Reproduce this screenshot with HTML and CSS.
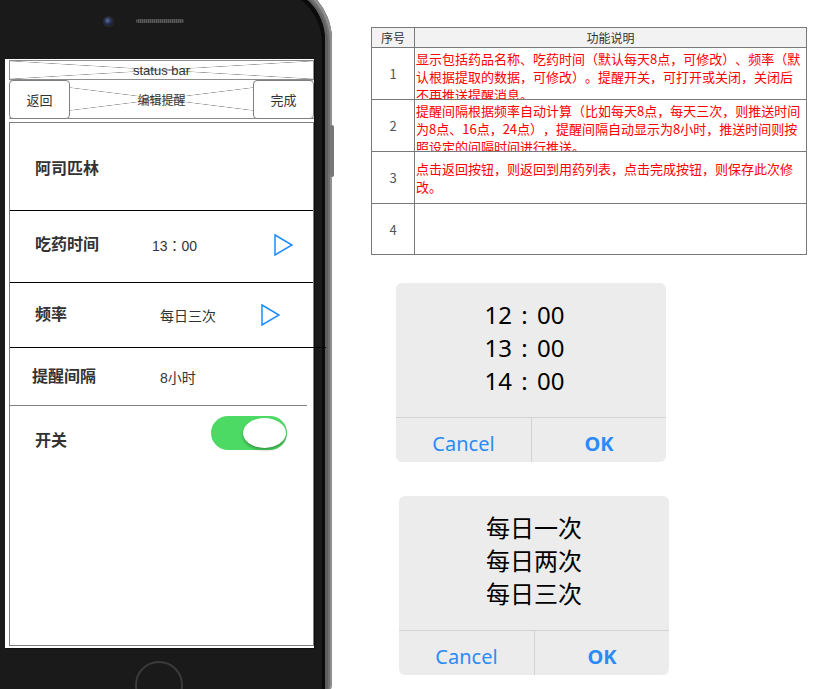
FILE: index.html
```html
<!DOCTYPE html>
<html lang="zh-CN">
<head>
<meta charset="utf-8">
<title>编辑提醒</title>
<link rel="stylesheet" href="styles.css">
</head>
<body>
<div class="page">
  <div class="phone-col">
    <div class="phone">
      <span class="side-button"></span>
      <div class="phone-body">
        <div class="sensors">
          <span class="camera"></span>
          <span class="speaker"></span>
          <span></span>
        </div>
        <div class="screen">
          <div class="statusbar xbox"><span>status bar</span></div>
          <div class="navbar xbox">
            <span class="nav-btn">返回</span>
            <span class="nav-title">编辑提醒</span>
            <span class="nav-btn">完成</span>
          </div>
          <div class="panel">
            <div class="row row-name"><span class="label">阿司匹林</span></div>
            <div class="row row-time">
              <span class="label label-time">吃药时间</span>
              <span class="value value-time">13：00</span>
              <svg class="arrow" viewBox="0 0 19 22"><polygon points="1,1 18,11 1,21" fill="none" stroke="#1e8cff" stroke-width="1.5" stroke-linejoin="miter"/></svg>
            </div>
            <div class="row row-freq">
              <span class="label">频率</span>
              <span class="value">每日三次</span>
              <svg class="arrow" viewBox="0 0 19 22"><polygon points="1,1 18,11 1,21" fill="none" stroke="#1e8cff" stroke-width="1.5" stroke-linejoin="miter"/></svg>
            </div>
            <div class="row row-gap">
              <span class="label">提醒间隔</span>
              <span class="value">8小时</span>
            </div>
            <div class="row row-switch">
              <span class="label">开关</span>
              <span class="switch"><span class="knob"></span></span>
            </div>
          </div>
        </div>
        <div class="home"></div>
      </div>
    </div>
  </div>

  <div class="side">
    <div class="spec">
      <div class="spec-head">序号</div>
      <div class="spec-head">功能说明</div>

      <div class="spec-num">1</div>
      <div class="spec-desc clip">显示包括药品名称、吃药时间（默认每天8点，可修改）、频率（默认根据提取的数据，可修改）。提醒开关，可打开或关闭，关闭后不再推送提醒消息。</div>

      <div class="spec-num">2</div>
      <div class="spec-desc clip">提醒间隔根据频率自动计算（比如每天8点，每天三次，则推送时间为8点、16点，24点），提醒间隔自动显示为8小时，推送时间则按照设定的间隔时间进行推送。</div>

      <div class="spec-num">3</div>
      <div class="spec-desc">点击返回按钮，则返回到用药列表，点击完成按钮，则保存此次修改。</div>

      <div class="spec-num spec-last">4</div>
      <div class="spec-desc spec-last"></div>
    </div>

    <div class="dialog dialog-time">
      <div class="dialog-body">
        <div>12 : 00</div>
        <div>13 : 00</div>
        <div>14 : 00</div>
      </div>
      <div class="dialog-actions">
        <span class="btn-cancel">Cancel</span>
        <span class="btn-ok">OK</span>
      </div>
    </div>

    <div class="dialog dialog-freq">
      <div class="dialog-body">
        <div>每日一次</div>
        <div>每日两次</div>
        <div>每日三次</div>
      </div>
      <div class="dialog-actions">
        <span class="btn-cancel">Cancel</span>
        <span class="btn-ok">OK</span>
      </div>
    </div>
  </div>
</div>
</body>
</html>
```

FILE: styles.css
```css
* { box-sizing: border-box; }

html, body {
  margin: 0;
  padding: 0;
  background: #fff;
  overflow: hidden;
}

body {
  width: 814px;
  height: 689px;
  text-spacing-trim: space-all;
}

.page {
  display: flex;
  height: 689px;
  overflow: hidden;
}

/* ---------- phone ---------- */
.phone-col {
  flex: none;
  width: 332px;
}

.phone {
  position: relative;
  width: 380px;
  height: 760px;
  margin: -21px 0 0 -48px;
  padding: 7px 7px 0 0;
  border-radius: 61px;
  background: #5e5e5e;
  box-shadow: inset -2px 2px 0 #8f8f8f, inset -4px 3px 0 #6f6f6f;
}

.side-button {
  position: absolute;
  top: 146px;
  right: -2px;
  width: 4px;
  height: 52px;
  border-radius: 2px;
  background: #777;
}

.phone-body {
  height: 100%;
  padding-left: 53px;
  border-radius: 54px 54px 0 0;
  background: #1a1a1a;
  box-shadow: inset -3px 3px 0 #0b0b0b;
}

.sensors {
  width: 309px;
  height: 73px;
  padding-top: 31px;
  display: grid;
  grid-template-columns: 1fr auto 1fr;
  grid-template-rows: 8px;
  align-items: center;
}

.camera {
  justify-self: end;
  margin-right: 23px;
  width: 9px;
  height: 9px;
  border-radius: 50%;
  background: radial-gradient(circle at 40% 40%, #5a6a9a 0, #26304e 45%, #0c0f1a 100%);
  box-shadow: 0 0 0 1px #2c2c2c;
}

.speaker {
  width: 48px;
  height: 4px;
  border-radius: 2px;
  background: repeating-linear-gradient(90deg, #5a5a5a 0 1px, #3c3c3c 1px 2px);
}

.screen {
  width: 309px;
  height: 589px;
  padding: 1px 0 0 4px;
  background: #fff;
  box-shadow: 1px 1px 1px rgba(0, 0, 0, 0.45);
  font-family: "Liberation Sans", "Noto Sans CJK SC", sans-serif;
  color: #333;
}

.home {
  width: 48px;
  height: 48px;
  margin: 13px 0 0 130px;
  border: 2px solid #3a3a3a;
  border-radius: 50%;
}

/* wireframe placeholder cross */
.xbox {
  background:
    linear-gradient(to top right, transparent calc(50% - 0.6px), #9a9a9a 50%, transparent calc(50% + 0.6px)),
    linear-gradient(to bottom right, transparent calc(50% - 0.6px), #9a9a9a 50%, transparent calc(50% + 0.6px));
}

.statusbar {
  height: 20px;
  border: 1px solid #8c8c8c;
  display: flex;
  align-items: center;
  justify-content: center;
  font-size: 13px;
}

.navbar {
  height: 39px;
  border-bottom: 1px solid #8c8c8c;
  display: flex;
  align-items: stretch;
  justify-content: space-between;
  font-size: 13px;
}

.nav-btn {
  width: 61px;
  margin-bottom: -1px;
  border: 1px solid #7f7f7f;
  border-radius: 4px;
  background: #fff;
  display: flex;
  align-items: center;
  justify-content: center;
}

.nav-title {
  align-self: center;
  font-size: 12px;
}

.panel {
  margin-top: 3px;
  height: 524px;
  border: 1px solid #7f7f7f;
  display: flex;
  flex-direction: column;
}

.row {
  flex: none;
  display: flex;
  align-items: center;
  padding-left: 25px;
  border-bottom: 1px solid #000;
}

.row-name { height: 88px; padding-top: 4px; }
.row-time { height: 72px; padding-bottom: 4px; }
.row-freq { height: 65px; margin-right: -13px; padding-right: 13px; }
.row-gap { height: 58px; padding-left: 22px; margin-right: 6px; border-bottom-color: #808080; }
.row-switch {
  flex: 1;
  align-items: flex-start;
  padding-top: 10px;
  border-bottom: none;
}

.label {
  flex: none;
  width: 125px;
  font-size: 16px;
  font-weight: bold;
  line-height: 20px;
  color: #333;
}

.label-time { width: 117px; }
.row-gap .label { width: 128px; }
.row-switch .label { margin-top: 15px; }

.value {
  font-size: 14px;
  color: #333;
}

.value-time {
  font-family: "Liberation Sans", "Noto Sans CJK TC", sans-serif;
}

.arrow {
  flex: none;
  margin-left: auto;
  margin-right: 20px;
  width: 19px;
  height: 22px;
}

.row-freq .arrow { margin-right: 33px; }

.switch {
  flex: none;
  margin: 0 26px 0 auto;
  width: 76px;
  height: 34px;
  padding-right: 1px;
  border-radius: 17px;
  background: #4cd964;
  display: flex;
  align-items: center;
  justify-content: flex-end;
}

.knob {
  width: 43px;
  height: 30px;
  border-radius: 50%;
  background: #fff;
  box-shadow: 0 2px 3px rgba(0, 0, 0, 0.3);
}

/* ---------- right side ---------- */
.side {
  flex: none;
  padding: 27px 0 0 39px;
  display: flex;
  flex-direction: column;
  align-items: flex-start;
}

.spec {
  width: 436px;
  display: grid;
  grid-template-columns: 43px 392px;
  border-top: 1px solid #797979;
  border-left: 1px solid #797979;
  font-family: "Noto Sans CJK SC", sans-serif;
}

.spec > div {
  border-right: 1px solid #797979;
  border-bottom: 1px solid #797979;
}

.spec-head {
  height: 20px;
  background: #f2f2f2;
  display: flex;
  align-items: center;
  justify-content: center;
  font-size: 12px;
  color: #333;
}

.spec-num {
  height: 52px;
  display: flex;
  align-items: center;
  justify-content: center;
  font-size: 13px;
  color: #555;
}

.spec-desc {
  height: 52px;
  overflow: hidden;
  padding: 0 2px 0 1px;
  display: flex;
  align-items: center;
  font-size: 13px;
  line-height: 18px;
  color: #f00;
}

.spec-desc.clip {
  align-items: flex-start;
  padding-top: 2px;
}

.spec .spec-last { height: 51px; }

.dialog {
  width: 270px;
  height: 179px;
  border-radius: 6px;
  background: #ececec;
  display: flex;
  flex-direction: column;
  overflow: hidden;
  font-family: "Noto Sans", "Noto Sans CJK SC", sans-serif;
}

.dialog-time { margin: 28px 0 0 25px; }
.dialog-freq { margin: 34px 0 0 28px; }

.dialog-body {
  height: 135px;
  padding-top: 15px;
  border-bottom: 1px solid #d3d3d3;
  text-align: center;
  font-size: 24px;
  line-height: 33px;
  color: #000;
}

.dialog-time .dialog-body {
  padding-right: 13px;
  word-spacing: 3px;
}

.dialog-actions {
  flex: 1;
  display: grid;
  grid-template-columns: 135px 1fr;
}

.dialog-actions span {
  display: flex;
  align-items: center;
  justify-content: center;
  padding-top: 6px;
  font-size: 20px;
  color: #2b8bf5;
}

.dialog-actions .btn-ok {
  border-left: 1px solid #d3d3d3;
  font-weight: bold;
}
```
